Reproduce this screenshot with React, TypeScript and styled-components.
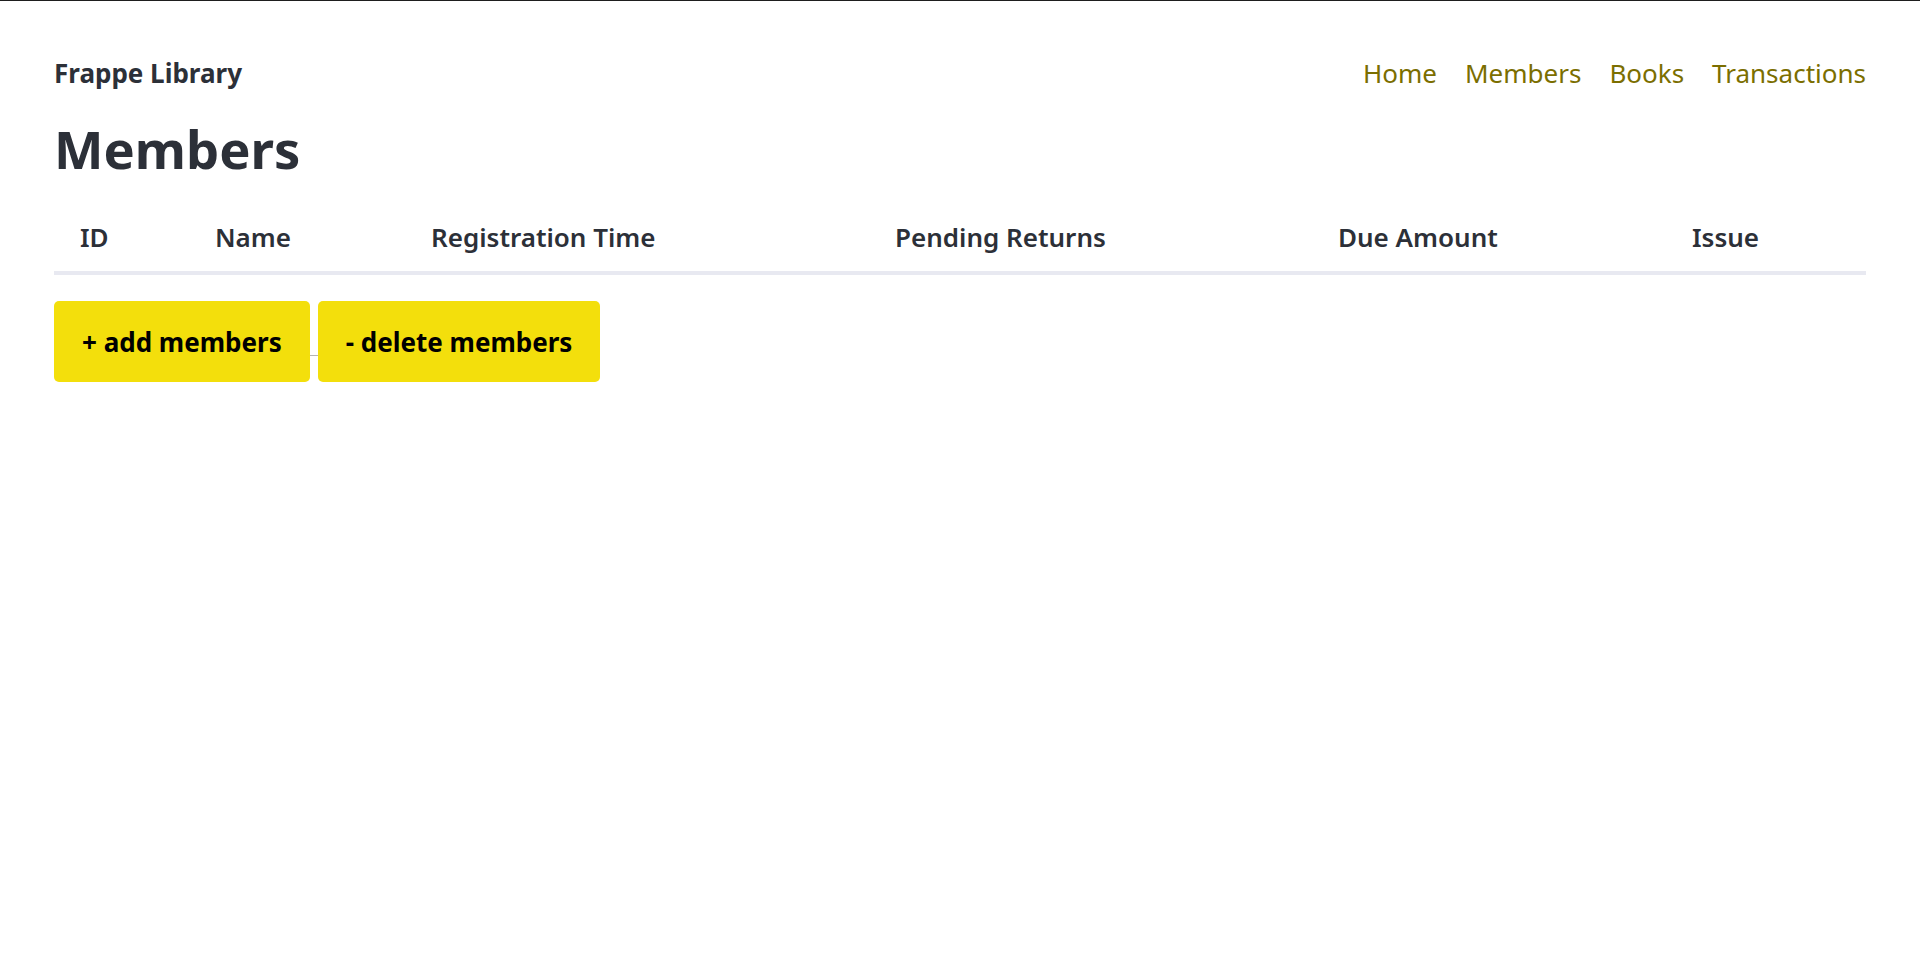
import React from "react";
import styled, { createGlobalStyle } from "styled-components";

const GlobalStyle = createGlobalStyle`
  html, body {
    margin: 0;
    padding: 0;
    background: #ffffff;
  }
  body {
    border-top: 1px solid #1e1e1e;
    font-family: "Noto Sans", "Open Sans", sans-serif;
    color: #2c3038;
  }
`;

const Page = styled.div`
  padding: 52px 54px 0 54px;
  display: flex;
  flex-direction: column;
`;

const TopBar = styled.header`
  display: flex;
  align-items: center;
  justify-content: space-between;
  height: 40px;
`;

const Brand = styled.div`
  font-size: 26px;
  font-weight: 700;
  line-height: 40px;
  color: #2c3038;
`;

const Nav = styled.nav`
  display: flex;
  gap: 28px;
`;

const NavLink = styled.a`
  font-size: 26px;
  line-height: 40px;
  color: #7b6e00;
  text-decoration: none;
  cursor: pointer;
`;

const Title = styled.h1`
  margin: 26px 0 0 0;
  font-size: 52.5px;
  line-height: 60px;
  font-weight: 700;
  color: #2c3038;
`;

const HeaderRow = styled.div`
  margin-top: 26px;
  display: grid;
  grid-template-columns: 135px 216px 464px 443px 354px 1fr;
  border-bottom: 4px solid #e8e9f1;
`;

const HeaderCell = styled.div`
  padding: 12px 0 14px 26px;
  font-size: 26px;
  line-height: 40px;
  font-weight: 600;
  color: #2c3038;
  white-space: nowrap;
`;

const Actions = styled.div`
  margin-top: 26px;
  display: flex;
  align-items: flex-start;
`;

const ActionButton = styled.button`
  height: 81px;
  padding: 0 28px;
  border: none;
  border-radius: 5px;
  background: #f3df0c;
  color: #000000;
  font-family: "Noto Sans", "Open Sans", sans-serif;
  font-size: 26px;
  font-weight: 700;
  line-height: 40px;
  cursor: pointer;
`;

const Joiner = styled.span`
  display: block;
  width: 8px;
  height: 1px;
  margin-top: 54px;
  background: #b4b4b4;
`;

const columns = [
  "ID",
  "Name",
  "Registration Time",
  "Pending Returns",
  "Due Amount",
  "Issue",
];

export default function App() {
  return (
    <>
      <GlobalStyle />
      <Page>
        <TopBar>
          <Brand>Frappe Library</Brand>
          <Nav>
            <NavLink>Home</NavLink>
            <NavLink>Members</NavLink>
            <NavLink>Books</NavLink>
            <NavLink>Transactions</NavLink>
          </Nav>
        </TopBar>
        <Title>Members</Title>
        <HeaderRow>
          {columns.map((c) => (
            <HeaderCell key={c}>{c}</HeaderCell>
          ))}
        </HeaderRow>
        <Actions>
          <ActionButton>+ add members</ActionButton>
          <Joiner />
          <ActionButton>- delete members</ActionButton>
        </Actions>
      </Page>
    </>
  );
}
